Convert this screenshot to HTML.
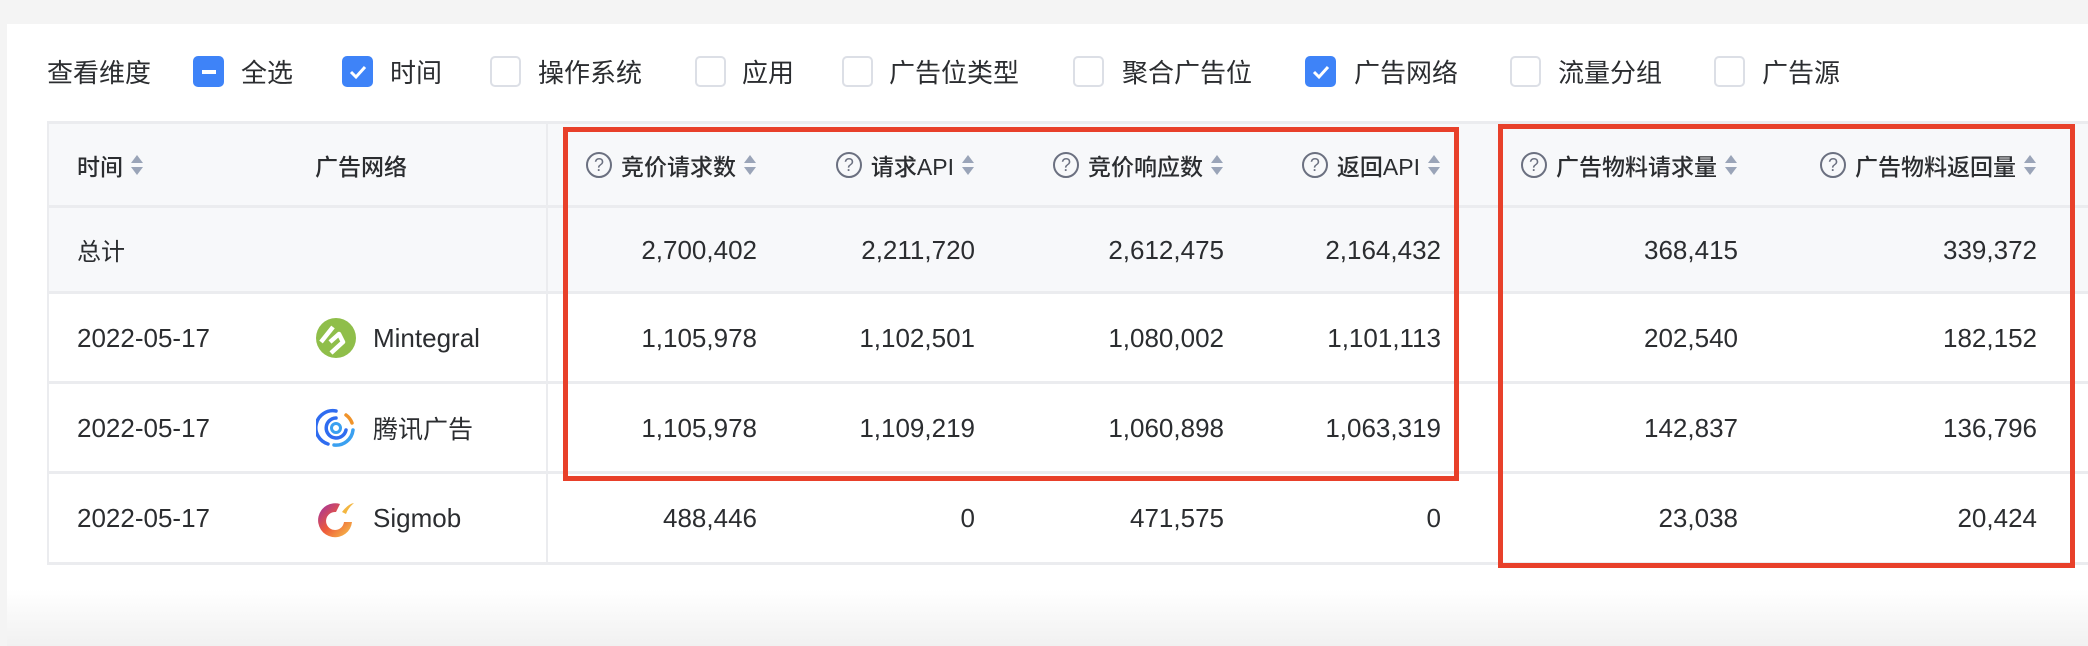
<!DOCTYPE html>
<html><head><meta charset="utf-8">
<style>
*{margin:0;padding:0;box-sizing:border-box}
body{width:2088px;height:646px;overflow:hidden;background:#f4f4f4;font-family:"Liberation Sans","Noto Sans CJK SC",sans-serif;color:#2b2d30;position:relative}
.card{position:absolute;left:7px;top:24px;right:0;bottom:0;background:linear-gradient(#fff 0,#fff 565px,#f1f1f1 622px)}
.abs{position:absolute}
.cbl{position:absolute;top:56px;width:31px;height:31px;border:2px solid #dcdfe6;border-radius:5px;background:#fff}
.cbl.on{background:#3e83f8;border-color:#3e83f8}
.lab{position:absolute;top:50px;font-size:26px;line-height:44px;color:#2b2d30;font-family:"Noto Sans CJK SC",sans-serif}
.row{position:absolute;left:47px;right:0;border-bottom:3px solid #ebecef}
.hd{position:absolute;top:148px;height:34px;display:flex;align-items:center;font-size:23px;font-weight:500;font-family:"Liberation Sans","Noto Sans CJK SC",sans-serif}
.q{width:26px;height:26px;border:2px solid #6b7080;border-radius:50%;font-size:18px;font-weight:normal;color:#6b7080;display:flex;align-items:center;justify-content:center;margin-right:9px;font-family:"Liberation Sans",sans-serif}
.s{display:inline-block;width:13px;height:20px;margin-left:8px;position:relative}
.s:before,.s:after{content:"";position:absolute;left:0;border-left:6.5px solid transparent;border-right:6.5px solid transparent}
.s:before{top:0;border-bottom:8px solid #9aa4b8}
.s:after{bottom:0;border-top:8px solid #9aa4b8}
.n{position:absolute;font-size:26px;line-height:34px;text-align:right;width:200px}
.t{position:absolute;font-size:26px;line-height:34px}
.red{position:absolute;border:5px solid #e8402a}
</style></head><body>
<div class="card"></div>
<div class="lab" style="left:47px">查看维度</div>
<div class="cbl on" style="left:193px"><div class="abs" style="left:7px;top:12px;width:14px;height:3.5px;background:#fff"></div></div>
<div class="lab" style="left:241px">全选</div>
<div class="cbl on" style="left:342px"><svg class="abs" style="left:3px;top:3px" width="22" height="22" viewBox="0 0 22 22"><path d="M4 11 L9 16 L18 6" stroke="#fff" stroke-width="3" fill="none"/></svg></div>
<div class="lab" style="left:390px">时间</div>
<div class="cbl" style="left:490px"></div><div class="lab" style="left:538px">操作系统</div>
<div class="cbl" style="left:695px"></div><div class="lab" style="left:742px">应用</div>
<div class="cbl" style="left:842px"></div><div class="lab" style="left:889px">广告位类型</div>
<div class="cbl" style="left:1073px"></div><div class="lab" style="left:1122px">聚合广告位</div>
<div class="cbl on" style="left:1305px"><svg class="abs" style="left:3px;top:3px" width="22" height="22" viewBox="0 0 22 22"><path d="M4 11 L9 16 L18 6" stroke="#fff" stroke-width="3" fill="none"/></svg></div>
<div class="lab" style="left:1354px">广告网络</div>
<div class="cbl" style="left:1510px"></div><div class="lab" style="left:1558px">流量分组</div>
<div class="cbl" style="left:1714px"></div><div class="lab" style="left:1762px">广告源</div>

<div class="abs" style="left:47px;top:121px;right:0;height:3px;background:#ebecef"></div>
<div class="row" style="top:124px;height:84px;background:#f7f8fa"></div>
<div class="row" style="top:208px;height:86px;background:#f7f8fa"></div>
<div class="row" style="top:294px;height:90px;background:#fff"></div>
<div class="row" style="top:384px;height:90px;background:#fff"></div>
<div class="row" style="top:474px;height:91px;background:#fff"></div>
<div class="abs" style="left:47px;top:121px;width:2px;height:444px;background:#ebecef"></div>
<div class="abs" style="left:546px;top:124px;width:2px;height:438px;background:#ebecef"></div>

<div class="hd" style="left:77px">时间<span class="s"></span></div>
<div class="hd" style="left:315px">广告网络</div>
<div class="hd" style="right:1331px"><span class="q">?</span>竞价请求数<span class="s"></span></div>
<div class="hd" style="right:1113px"><span class="q">?</span>请求API<span class="s"></span></div>
<div class="hd" style="right:864px"><span class="q">?</span>竞价响应数<span class="s"></span></div>
<div class="hd" style="right:647px"><span class="q">?</span>返回API<span class="s"></span></div>
<div class="hd" style="right:350px"><span class="q">?</span>广告物料请求量<span class="s"></span></div>
<div class="hd" style="right:51px"><span class="q">?</span>广告物料返回量<span class="s"></span></div>

<div class="t" style="left:77px;top:233px;font-family:'Noto Sans CJK SC',sans-serif;font-size:24px">总计</div>
<div class="t" style="left:77px;top:321px">2022-05-17</div>
<div class="t" style="left:77px;top:411px">2022-05-17</div>
<div class="t" style="left:77px;top:501px">2022-05-17</div>

<svg class="abs" style="left:316px;top:318px" width="40" height="40" viewBox="0 0 40 40"><circle cx="20" cy="20" r="20" fill="#8fbe4a"/><path d="M5 24 L17 9 M14 24 L23 16 L27 24 L15 35" stroke="#fff" stroke-width="4.5" fill="none" stroke-linejoin="round"/></svg>
<div class="t" style="left:373px;top:321px">Mintegral</div>
<svg class="abs" style="left:316px;top:408px" width="40" height="40" viewBox="0 0 40 40"><g fill="none" stroke-linecap="round"><path d="M20 3 A17 17 0 0 0 12 36" stroke="#2f6cf0" stroke-width="3.5"/><path d="M18 37 A17 17 0 0 0 37 22" stroke="#3aa0f0" stroke-width="3.5"/><path d="M30 7 A17 17 0 0 1 36 15" stroke="#f0932a" stroke-width="3.5"/><path d="M20 10 A10 10 0 1 0 30 22" stroke="#2f6cf0" stroke-width="3.5"/><circle cx="20" cy="20" r="4.5" stroke="#3aa0f0" stroke-width="3"/></g></svg>
<div class="t" style="left:373px;top:411px;font-family:'Noto Sans CJK SC',sans-serif;font-size:25px">腾讯广告</div>
<svg class="abs" style="left:316px;top:500px" width="40" height="40" viewBox="0 0 40 40"><defs><linearGradient id="g" x1="0" y1="0" x2="1" y2="1"><stop offset="0" stop-color="#9b2fa8"/><stop offset="0.5" stop-color="#ee5a3a"/><stop offset="1" stop-color="#f6c94a"/></linearGradient></defs><path d="M24 4 A17 17 0 1 0 36 22 L28 22 A9 9 0 1 1 20 12 Z" fill="url(#g)"/><path d="M26 12 Q32 4 38 3 Q32 8 30 14Z" fill="#f3b640"/></svg>
<div class="t" style="left:373px;top:501px">Sigmob</div>

<div class="n" style="left:557px;top:233px">2,700,402</div>
<div class="n" style="left:775px;top:233px">2,211,720</div>
<div class="n" style="left:1024px;top:233px">2,612,475</div>
<div class="n" style="left:1241px;top:233px">2,164,432</div>
<div class="n" style="left:1538px;top:233px">368,415</div>
<div class="n" style="left:1837px;top:233px">339,372</div>

<div class="n" style="left:557px;top:321px">1,105,978</div>
<div class="n" style="left:775px;top:321px">1,102,501</div>
<div class="n" style="left:1024px;top:321px">1,080,002</div>
<div class="n" style="left:1241px;top:321px">1,101,113</div>
<div class="n" style="left:1538px;top:321px">202,540</div>
<div class="n" style="left:1837px;top:321px">182,152</div>

<div class="n" style="left:557px;top:411px">1,105,978</div>
<div class="n" style="left:775px;top:411px">1,109,219</div>
<div class="n" style="left:1024px;top:411px">1,060,898</div>
<div class="n" style="left:1241px;top:411px">1,063,319</div>
<div class="n" style="left:1538px;top:411px">142,837</div>
<div class="n" style="left:1837px;top:411px">136,796</div>

<div class="n" style="left:557px;top:501px">488,446</div>
<div class="n" style="left:775px;top:501px">0</div>
<div class="n" style="left:1024px;top:501px">471,575</div>
<div class="n" style="left:1241px;top:501px">0</div>
<div class="n" style="left:1538px;top:501px">23,038</div>
<div class="n" style="left:1837px;top:501px">20,424</div>

<div class="red" style="left:563px;top:127px;width:896px;height:354px"></div>
<div class="red" style="left:1498px;top:124px;width:577px;height:444px"></div>
</body></html>
